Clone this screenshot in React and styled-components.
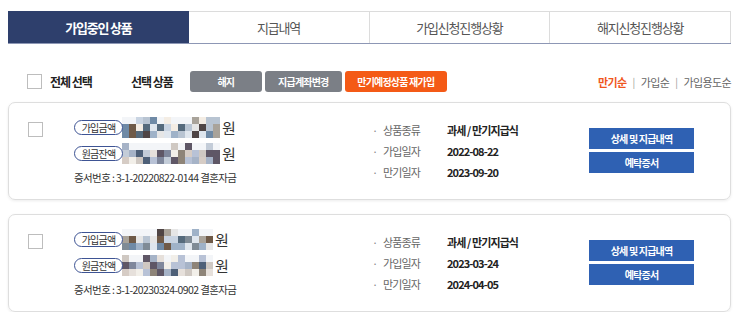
import styled, { createGlobalStyle } from 'styled-components';

const GlobalStyle = createGlobalStyle`
  body {
    margin: 0;
    background: #fff;
    font-family: 'Noto Sans CJK KR', 'Noto Sans', sans-serif;
    color: #333;
  }
`;

const Page = styled.div`
  width: 723px;
  padding: 11px 12px 0 8px;
`;

const Tabs = styled.div`
  display: grid;
  grid-template-columns: repeat(4, 1fr);
  border-bottom: 1px solid #8d97b5;
`;

const Tab = styled.div`
  height: 31px;
  display: flex;
  align-items: center;
  justify-content: center;
  font-size: 13px;
  letter-spacing: -1.2px;
  font-weight: ${({ $active }) => ($active ? 700 : 400)};
  color: ${({ $active }) => ($active ? '#fff' : '#555')};
  background: ${({ $active }) => ($active ? '#2e3f6c' : '#fff')};
  border: 1px solid ${({ $active }) => ($active ? '#2e3f6c' : '#dcdcdc')};
  border-bottom: none;
  border-left: ${({ $first }) => ($first ? '1px solid #2e3f6c' : 'none')};
`;

const Toolbar = styled.div`
  display: flex;
  align-items: center;
  margin-top: 27px;
  padding-left: 19px;
  height: 21px;
`;

const Check = styled.span`
  display: inline-block;
  width: 13px;
  height: 13px;
  border: 1px solid #bdbdbd;
  background: #fff;
  flex-shrink: 0;
`;

const Label = styled.span`
  font-size: 12px;
  letter-spacing: -1px;
  font-weight: 700;
  color: #222;
  margin-left: ${({ $ml }) => $ml}px;
`;

const ActionBtn = styled.div`
  width: ${({ $w }) => $w}px;
  height: 21px;
  margin-left: ${({ $ml }) => $ml}px;
  border-radius: 3px;
  background: ${({ $orange }) => ($orange ? '#f45a16' : '#7b7f86')};
  color: #fff;
  font-size: 10px;
  letter-spacing: -0.8px;
  font-weight: 700;
  display: flex;
  align-items: center;
  justify-content: center;
`;

const Sort = styled.div`
  margin-left: auto;
  display: flex;
  align-items: center;
  font-size: 11px;
  letter-spacing: -0.6px;
  color: #666;
`;

const SortItem = styled.span`
  color: ${({ $active }) => ($active ? '#f0561d' : '#666')};
  font-weight: ${({ $active }) => ($active ? 700 : 400)};
`;

const Sep = styled.span`
  color: #999;
  margin: 0 6px;
  font-size: 10px;
`;

const Card = styled.div`
  margin-top: ${({ $mt }) => $mt}px;
  height: 98px;
  border: 1px solid #dedede;
  border-radius: 7px;
  box-shadow: 0 1px 3px rgba(0, 0, 0, 0.08);
  display: grid;
  grid-template-columns: 46px 298px 217px 105px;
  padding: 15px 0 0 19px;
  box-sizing: border-box;
`;

const CardCheck = styled(Check)`
  margin-top: 3px;
`;

const Info = styled.div`
  display: flex;
  flex-direction: column;
  margin-top: -2px;
`;

const AmountRow = styled.div`
  display: flex;
  align-items: center;
  height: 22px;
  margin-bottom: ${({ $mb }) => $mb || 0}px;
`;

const Pill = styled.span`
  width: 47px;
  height: 13px;
  border: 1px solid #3e5494;
  border-radius: 8px;
  font-size: 10px;
  letter-spacing: -0.8px;
  color: #333;
  display: flex;
  align-items: center;
  justify-content: center;
  flex-shrink: 0;
  background: #fff;
  position: relative;
  z-index: 1;
`;

const Won = styled.span`
  font-size: 15px;
  color: #333;
  margin-left: 2px;
`;

const CertNo = styled.div`
  font-size: 10.5px;
  letter-spacing: -0.6px;
  color: #333;
  margin-top: 6px;
`;

const Details = styled.div`
  display: flex;
  flex-direction: column;
  padding-top: 1px;
`;

const DetailRow = styled.div`
  display: flex;
  align-items: center;
  height: 21px;
  font-size: 11px;
  letter-spacing: -0.9px;
`;

const Bullet = styled.span`
  width: 11px;
  color: #888;
`;

const Key = styled.span`
  width: 64px;
  color: #666;
`;

const Value = styled.span`
  color: #222;
  font-weight: 700;
`;

const Buttons = styled.div`
  display: flex;
  flex-direction: column;
  gap: 3px;
  padding-top: 10px;
`;

const BlueBtn = styled.div`
  height: 21px;
  background: #2f61b3;
  color: #fff;
  font-size: 10px;
  letter-spacing: -0.8px;
  font-weight: 700;
  display: flex;
  align-items: center;
  justify-content: center;
`;

const palettes = [
  ['#dfe6ee', '#c9d4e2', '#9fb2c8', '#6f8aa6', '#556a7c', '#a9a39a', '#6f5a48', '#f4ede4', '#e6e6e6', '#b8c4d2', '#4f4545', '#7f8b96'],
  ['#e6e0db', '#cfc8c2', '#b8c2d6', '#7f879c', '#4e6078', '#2a4a64', '#d6ccc5', '#8e8478', '#f2efe9', '#c3ccd8', '#5f5766', '#a6b3c7'],
];

function seeded(n) {
  let s = n;
  return () => {
    s = (s * 9301 + 49297) % 233280;
    return s / 233280;
  };
}

function Mosaic({ seed, cols, pal }) {
  const rnd = seeded(seed);
  const rects = [];
  for (let r = 0; r < 3; r++) {
    for (let c = 0; c < cols; c++) {
      const v = rnd();
      const col = r === 0 && v > 0.5 ? '#f3f5f8' : pal[Math.floor(rnd() * pal.length)];
      rects.push(<rect key={`${r}-${c}`} x={c * 7} y={r * 7} width="7" height="7" fill={col} />);
    }
  }
  return (
    <svg width={cols * 7} height="21" style={{ marginLeft: -1 }}>
      {rects}
    </svg>
  );
}

const cards = [
  { id: '20220822-0144', join: '2022-08-22', due: '2023-09-20', cols: [14, 14], mt: 10 },
  { id: '20230324-0902', join: '2023-03-24', due: '2024-04-05', cols: [13, 13], mt: 14 },
];

export default function App() {
  return (
    <Page>
      <GlobalStyle />
      <Tabs>
        <Tab $active $first>가입중인 상품</Tab>
        <Tab>지급내역</Tab>
        <Tab>가입신청진행상황</Tab>
        <Tab>해지신청진행상황</Tab>
      </Tabs>
      <Toolbar>
        <Check />
        <Label $ml={8}>전체 선택</Label>
        <Label $ml={39}>선택 상품</Label>
        <ActionBtn $w={72} $ml={17}>해지</ActionBtn>
        <ActionBtn $w={77} $ml={3}>지급계좌변경</ActionBtn>
        <ActionBtn $w={102} $ml={3} $orange>만기예정상품 재가입</ActionBtn>
        <Sort>
          <SortItem $active>만기순</SortItem>
          <Sep>|</Sep>
          <SortItem>가입순</SortItem>
          <Sep>|</Sep>
          <SortItem>가입용도순</SortItem>
        </Sort>
      </Toolbar>
      {cards.map((c, i) => (
        <Card key={c.id} $mt={c.mt}>
          <div>
            <CardCheck />
          </div>
          <Info>
            <AmountRow $mb={4}>
              <Pill>가입금액</Pill>
              <Mosaic seed={11 + i * 7} cols={c.cols[0]} pal={palettes[0]} />
              <Won>원</Won>
            </AmountRow>
            <AmountRow>
              <Pill>원금잔액</Pill>
              <Mosaic seed={23 + i * 5} cols={c.cols[1]} pal={palettes[1]} />
              <Won>원</Won>
            </AmountRow>
            <CertNo>증서번호 : 3-1-{c.id} 결혼자금</CertNo>
          </Info>
          <Details>
            <DetailRow>
              <Bullet>·</Bullet>
              <Key>상품종류</Key>
              <Value>과세 / 만기지급식</Value>
            </DetailRow>
            <DetailRow>
              <Bullet>·</Bullet>
              <Key>가입일자</Key>
              <Value>{c.join}</Value>
            </DetailRow>
            <DetailRow>
              <Bullet>·</Bullet>
              <Key>만기일자</Key>
              <Value>{c.due}</Value>
            </DetailRow>
          </Details>
          <Buttons>
            <BlueBtn>상세 및 지급내역</BlueBtn>
            <BlueBtn>예탁증서</BlueBtn>
          </Buttons>
        </Card>
      ))}
    </Page>
  );
}
